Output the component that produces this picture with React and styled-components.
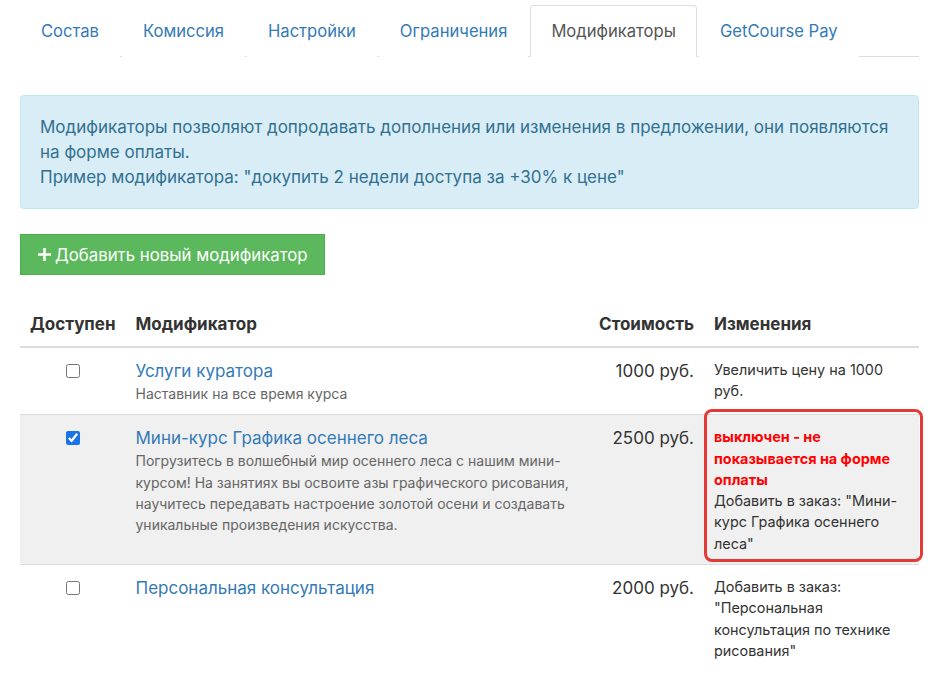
import styled, { createGlobalStyle } from "styled-components";

const GlobalStyle = createGlobalStyle`
  body {
    margin: 0;
    background: #fff;
    font-family: Inter, "Noto Sans", "Liberation Sans", sans-serif;
    color: #333;
  }
  * { box-sizing: border-box; }
`;

const Page = styled.div`
  padding: 5px 29px 0 20px;
`;

const Tabs = styled.ul`
  display: flex;
  list-style: none;
  margin: 0;
  padding: 0;
  border-bottom: 1px solid #ddd;
`;

const Tab = styled.li`
  margin-right: 2px;
  margin-bottom: -1px;
  padding: 13px 20px 12px;
  font-size: 16.6px;
  line-height: 25px;
  color: ${(p) => (p.active ? "#555" : "#337ab7")};
  background: #fff;
  border: 1px solid ${(p) => (p.active ? "#ddd" : "transparent")};
  border-bottom-color: ${(p) => (p.active ? "#fff" : "transparent")};
  border-radius: 4px 4px 0 0;
`;

const Alert = styled.div`
  margin-top: 38px;
  padding: 19px 19px 18px;
  background: #d9edf7;
  border: 1px solid #bce8f1;
  border-radius: 4px;
  color: #31708f;
  font-size: 17px;
  line-height: 25px;
`;

const AddButton = styled.button`
  margin-top: 25px;
  display: inline-flex;
  align-items: center;
  gap: 3px;
  height: 41px;
  padding: 0 16px;
  background: #5cb85c;
  border: 1px solid #4cae4c;
  border-radius: 0;
  color: #fff;
  font-family: inherit;
  font-size: 16.8px;
`;

const Table = styled.table`
  margin-top: 27px;
  width: 100%;
  border-collapse: collapse;
`;

const Th = styled.th`
  padding: 10px;
  font-size: 17px;
  line-height: 24px;
  font-weight: 700;
  color: #333;
  text-align: ${(p) => p.align || "left"};
  border-bottom: 2px solid #ddd;
  white-space: nowrap;
`;

const Row = styled.tr`
  background: ${(p) => (p.shaded ? "#f0f0f0" : "#fff")};
  border-top: 1px solid #ddd;
`;

const Td = styled.td`
  position: relative;
  padding: 11px 10px 10px;
  vertical-align: top;
  text-align: ${(p) => p.align || "left"};
  width: ${(p) => p.w || "auto"};
`;

const Check = styled.input`
  margin: 5px 0 0;
  width: 14px;
  height: 14px;
  accent-color: #1a73e8;
`;

const Title = styled.a`
  display: block;
  color: #337ab7;
  font-size: 17px;
  line-height: 24px;
  text-decoration: none;
`;

const Desc = styled.div`
  color: #666;
  font-size: 14px;
  line-height: 21.3px;
`;

const Price = styled.div`
  font-size: 17px;
  line-height: 24px;
  color: #333;
  white-space: nowrap;
`;

const Changes = styled.div`
  font-size: 14.4px;
  line-height: 21.3px;
  color: #333;
`;

const Warn = styled.div`
  color: #f00;
  font-weight: 700;
`;

const Highlight = styled.div`
  position: absolute;
  left: 0;
  right: -4px;
  top: -6px;
  bottom: 2px;
  border: 3px solid #e53935;
  border-radius: 8px;
  pointer-events: none;
`;

const tabs = ["Состав", "Комиссия", "Настройки", "Ограничения", "Модификаторы", "GetCourse Pay"];

const rows = [
  {
    on: false,
    title: "Услуги куратора",
    desc: "Наставник на все время курса",
    price: "1000 руб.",
    changes: "Увеличить цену на 1000 руб.",
  },
  {
    on: true,
    shaded: true,
    title: "Мини-курс Графика осеннего леса",
    desc:
      "Погрузитесь в волшебный мир осеннего леса с нашим мини-курсом! На занятиях вы освоите азы графического рисования, научитесь передавать настроение золотой осени и создавать уникальные произведения искусства.",
    price: "2500 руб.",
    warn: "выключен - не показывается на форме оплаты",
    changes: 'Добавить в заказ: "Мини-курс Графика осеннего леса"',
  },
  {
    on: false,
    title: "Персональная консультация",
    price: "2000 руб.",
    changes: 'Добавить в заказ: "Персональная консультация по технике рисования"',
  },
];

export default function App() {
  return (
    <>
      <GlobalStyle />
      <Page>
        <Tabs>
          {tabs.map((t) => (
            <Tab key={t} active={t === "Модификаторы"}>
              {t}
            </Tab>
          ))}
        </Tabs>

        <Alert>
          Модификаторы позволяют допродавать дополнения или изменения в предложении, они появляются
          на форме оплаты.
          <br />
          Пример модификатора: "докупить 2 недели доступа за +30% к цене"
        </Alert>

        <AddButton>
          <svg width="15" height="15" viewBox="0 0 15 15">
            <path d="M7.5 1v13M1 7.5h13" stroke="#fff" strokeWidth="2.6" />
          </svg>
          Добавить новый модификатор
        </AddButton>

        <Table>
          <thead>
            <tr>
              <Th>Доступен</Th>
              <Th>Модификатор</Th>
              <Th align="right">Стоимость</Th>
              <Th>Изменения</Th>
            </tr>
          </thead>
          <tbody>
            {rows.map((r) => (
              <Row key={r.title} shaded={r.shaded}>
                <Td align="center" w="105px">
                  <Check type="checkbox" defaultChecked={r.on} />
                </Td>
                <Td>
                  <Title href="#">{r.title}</Title>
                  {r.desc && <Desc>{r.desc}</Desc>}
                </Td>
                <Td align="right" w="120px">
                  <Price>{r.price}</Price>
                </Td>
                <Td w="215px">
                  <Changes>
                    {r.warn && <Warn>{r.warn}</Warn>}
                    {r.changes}
                  </Changes>
                  {r.warn && <Highlight />}
                </Td>
              </Row>
            ))}
          </tbody>
        </Table>
      </Page>
    </>
  );
}
